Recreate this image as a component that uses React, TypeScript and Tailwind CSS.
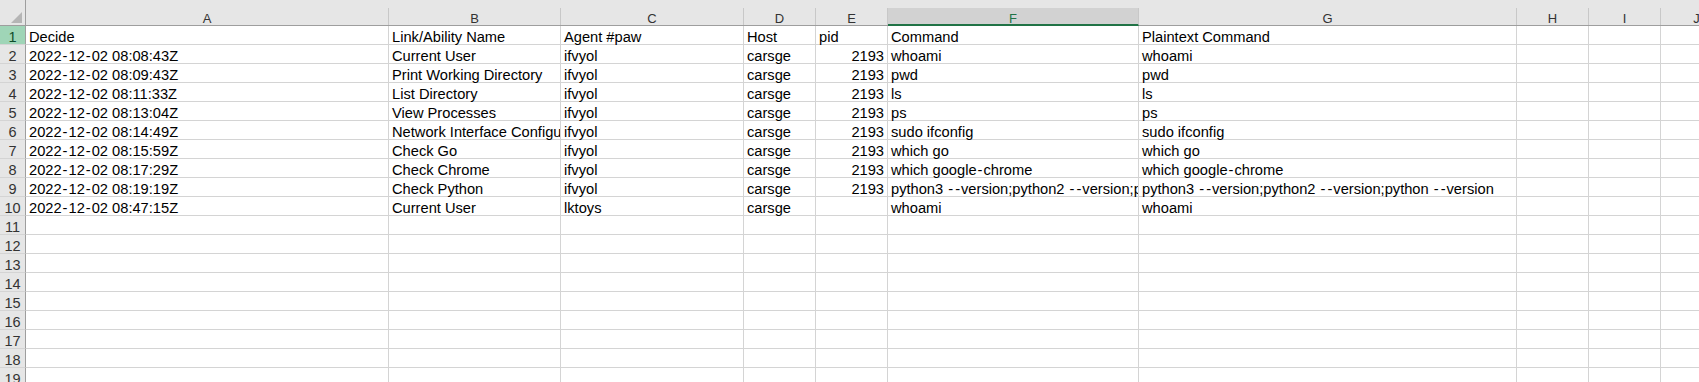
import React from "react";

const columns = [
  { key: "A", width: 363 },
  { key: "B", width: 172 },
  { key: "C", width: 183 },
  { key: "D", width: 72 },
  { key: "E", width: 72 },
  { key: "F", width: 251 },
  { key: "G", width: 378 },
  { key: "H", width: 72 },
  { key: "I", width: 72 },
  { key: "J", width: 72 },
];

const rows: string[][] = [
  ["Decide", "Link/Ability Name", "Agent #paw", "Host", "pid", "Command", "Plaintext Command"],
  ["2022-12-02 08:08:43Z", "Current User", "ifvyol", "carsge", "2193", "whoami", "whoami"],
  ["2022-12-02 08:09:43Z", "Print Working Directory", "ifvyol", "carsge", "2193", "pwd", "pwd"],
  ["2022-12-02 08:11:33Z", "List Directory", "ifvyol", "carsge", "2193", "ls", "ls"],
  ["2022-12-02 08:13:04Z", "View Processes", "ifvyol", "carsge", "2193", "ps", "ps"],
  ["2022-12-02 08:14:49Z", "Network Interface Configuration", "ifvyol", "carsge", "2193", "sudo ifconfig", "sudo ifconfig"],
  ["2022-12-02 08:15:59Z", "Check Go", "ifvyol", "carsge", "2193", "which go", "which go"],
  ["2022-12-02 08:17:29Z", "Check Chrome", "ifvyol", "carsge", "2193", "which google-chrome", "which google-chrome"],
  [
    "2022-12-02 08:19:19Z",
    "Check Python",
    "ifvyol",
    "carsge",
    "2193",
    "python3 --version;python2 --version;python --version",
    "python3 --version;python2 --version;python --version",
  ],
  ["2022-12-02 08:47:15Z", "Current User", "lktoys", "carsge", "", "whoami", "whoami"],
];

const TOTAL_ROWS = 19;

const CellText = ({ value }: { value: string }) => {
  const parts = value.split("-");
  return (
    <>
      {parts.map((p, i) => (
        <React.Fragment key={i}>
          {i > 0 && <span className="px-[1px]">-</span>}
          {p}
        </React.Fragment>
      ))}
    </>
  );
};

const App = () => {
  return (
    <div
      className="w-[1699px] h-[382px] overflow-hidden bg-white text-black"
      style={{ fontFamily: '"Liberation Sans", Arial, sans-serif' }}
    >
      {/* Column headers */}
      <div className="flex h-[26px] bg-[#e6e6e6] border-b border-[#9e9e9e]">
        <div className="w-[26px] shrink-0 h-[25px] relative border-r border-[#9e9e9e]">
          <svg className="absolute left-[11px] top-[12px]" width="11" height="11" viewBox="0 0 11 11">
            <polygon points="11,0 11,11 0,11" fill="#b5b5b5" />
          </svg>
        </div>
        {columns.map((c) => (
          <div
            key={c.key}
            style={{ width: c.width }}
            className={
              "shrink-0 mt-[8px] border-r border-[#c8c8c8] text-center text-[13px] leading-[22px] overflow-hidden " +
              (c.key === "F"
                ? "bg-[#d2d2d2] text-[#217346] border-b-2 border-b-[#217346] -mb-px h-[18px]"
                : "text-[#333] h-[17px]")
            }
          >
            {c.key}
          </div>
        ))}
      </div>

      {/* Rows */}
      {Array.from({ length: TOTAL_ROWS }).map((_, r) => {
        const data = rows[r] || [];
        return (
          <div key={r} className="flex h-[19px]">
            <div
              className={
                "w-[26px] shrink-0 text-center text-[14.5px] leading-[23px] overflow-x-clip border-r border-b border-r-[#9e9e9e] border-b-[#d4d4d4] " +
                (r === 0 ? "bg-[#9fd5b7] text-[#0e4b2a]" : "bg-[#e6e6e6] text-[#333]")
              }
            >
              {r + 1}
            </div>
            {columns.map((c, ci) => {
              const val = data[ci] || "";
              const numeric = ci === 4 && r > 0;
              return (
                <div
                  key={c.key}
                  style={{ width: c.width }}
                  className={
                    "shrink-0 border-r border-b border-[#d4d4d4] px-[3px] text-[14.67px] leading-[23px] whitespace-nowrap overflow-x-clip " +
                    (numeric ? "text-right" : "text-left")
                  }
                >
                  <CellText value={val} />
                </div>
              );
            })}
          </div>
        );
      })}
    </div>
  );
};

export default App;
